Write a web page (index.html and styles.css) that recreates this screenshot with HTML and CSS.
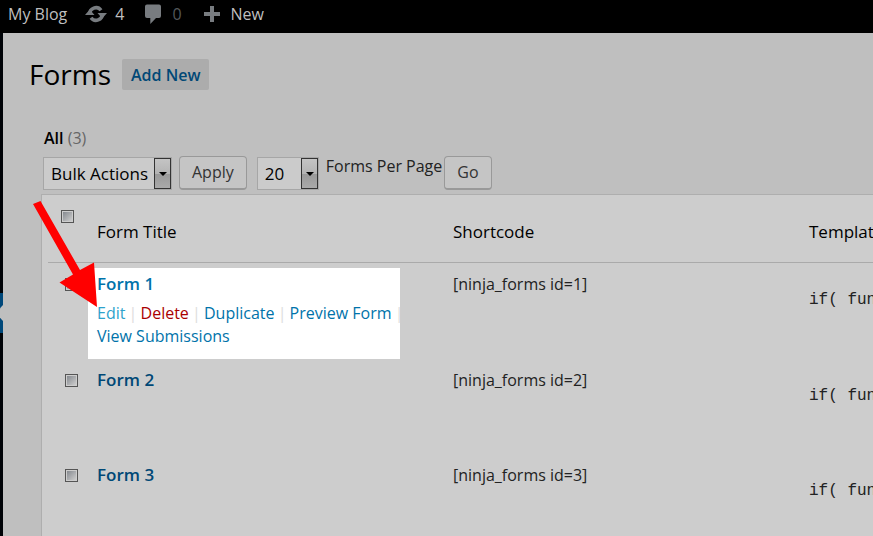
FILE: index.html
```
<!DOCTYPE html>
<html lang="en">
<head>
<meta charset="utf-8">
<title>Forms - My Blog</title>
<link rel="stylesheet" href="styles.css">
</head>
<body>
<nav class="adminbar">
  <a class="site" href="#">My Blog</a>
  <a class="updates" href="#">
    <svg width="22" height="18" viewBox="0 0 22 18" aria-hidden="true"><g fill="none" stroke="#787c80" stroke-width="3.500"><path d="M4.800 9.500A6.200 6.200 0 0 1 16 5.300"/><path d="M17.200 8.500A6.200 6.200 0 0 1 6 12.700"/></g><path d="M0 10L4.800 4.500L9.500 10ZM12.500 8H22L17.200 13.500Z"/></svg>
    <span>4</span>
  </a>
  <a class="comments" href="#">
    <svg width="18" height="20" viewBox="0 0 18 20" aria-hidden="true"><path d="M3 .5H15Q17 .5 17 2.500V12Q17 14 15 14H12L6.300 20V14H3Q1 14 1 12V2.500Q1 .5 3 .5Z"/></svg>
    <span>0</span>
  </a>
  <a class="new" href="#">
    <svg width="16" height="16" viewBox="0 0 16 16" aria-hidden="true"><path d="M6 0H10V6H16V10H10V16H6V10H0V6H6Z"/></svg>
    <span>New</span>
  </a>
</nav>
<div class="shell">
  <aside class="menu"><div class="current"></div></aside>
  <main>
    <header class="heading">
      <h1>Forms</h1>
      <a class="add" href="#">Add New</a>
    </header>
    <div class="views"><a href="#">All</a> <span>(3)</span></div>
    <form class="toolbar">
      <div class="select bulk">
        <select aria-label="Bulk actions"><option>Bulk Actions</option></select>
        <i></i>
      </div>
      <button type="button">Apply</button>
      <div class="select count">
        <select id="per-page"><option>20</option></select>
        <i></i>
      </div>
      <label for="per-page">Forms Per Page</label>
      <button type="button">Go</button>
    </form>
    <section class="panel">
      <table>
        <colgroup><col class="c-check"><col class="c-text"><col class="c-text"><col></colgroup>
        <thead>
          <tr>
            <th><input type="checkbox" aria-label="Select all"></th>
            <th>Form Title</th><th>Shortcode</th><th>Template Function</th>
          </tr>
        </thead>
        <tbody>
          <tr>
            <td><input type="checkbox" aria-label="Select Form 1"></td>
            <td class="lit">
              <div class="spotlight">
                <a class="title" href="#">Form 1</a>
                <div class="actions"><a class="edit" href="#">Edit</a> <b>|</b> <a class="delete" href="#">Delete</a> <b>|</b> <a href="#">Duplicate</a> <b>|</b> <a href="#">Preview Form</a> <b>|</b><br><a href="#">View Submissions</a></div>
                <svg class="arrow" width="64" height="106" viewBox="0 0 64 106" aria-hidden="true"><path d="M7.500 0L47 69L61 61.500L64 106L26.500 81.500L40 73.500L0 3Z"/></svg>
              </div>
            </td>
            <td>[ninja_forms id=1]</td>
            <td><code>if( function_exists( 'ninja_forms_display_form' ) )</code></td>
          </tr>
          <tr>
            <td><input type="checkbox" aria-label="Select Form 2"></td>
            <td><a class="title" href="#">Form 2</a></td>
            <td>[ninja_forms id=2]</td>
            <td><code>if( function_exists( 'ninja_forms_display_form' ) )</code></td>
          </tr>
          <tr>
            <td><input type="checkbox" aria-label="Select Form 3"></td>
            <td><a class="title" href="#">Form 3</a></td>
            <td>[ninja_forms id=3]</td>
            <td><code>if( function_exists( 'ninja_forms_display_form' ) )</code></td>
          </tr>
        </tbody>
      </table>
    </section>
  </main>
</div>
</body>
</html>
```
FILE: styles.css
```
* { box-sizing: border-box; }
body {
  margin: 0;
  min-height: 100vh;
  display: flex;
  flex-direction: column;
  overflow-x: hidden;
  background: #bfbfbf;
  color: #222;
  font: 16px/24px "Open Sans", sans-serif;
}
a { color: #004876; text-decoration: none; }

.adminbar {
  display: flex;
  height: 33px;
  padding: 0 8px 6px;
  background: #000;
}
.adminbar a { display: flex; align-items: center; gap: 8px; color: #bfbfbf; }
.adminbar svg { fill: #787c80; }
.adminbar .updates { margin-left: 18px; }
.adminbar .comments { margin-left: 20px; color: #54585b; gap: 10px; }
.adminbar .new { margin-left: 22px; gap: 11px; }

.shell { display: flex; flex: 1; }
.menu { width: 3px; flex: none; background: #000307; padding-top: 260px; }
.current { height: 40px; padding-top: 12px; background: #00487a; }
.current::after {
  content: "";
  display: block;
  height: 16px;
  background: #bfbfbf;
  clip-path: polygon(100% 0, 0 20%, 0 80%, 100% 100%);
}
main {
  display: flex;
  flex-direction: column;
  flex: 1;
  min-width: 0;
  padding: 23px 0 0 38px;
}

.heading { display: flex; align-items: center; gap: 11px; margin-left: -12px; height: 36px; }
h1 { margin: 0; font-size: 28px; font-weight: 400; color: #000; line-height: 36px; }
.add {
  padding: 4px 9px 3px;
  border-radius: 2px;
  background: #acacac;
  font-weight: 600;
}
.views { margin: 34px 0 6px 3px; color: #666; }
.views a { color: #000; font-weight: 600; }

.toolbar { display: flex; margin-left: 2px; height: 38px; }
.select { position: relative; height: 33px; margin-top: 1px; }
.select select {
  appearance: none;
  width: 100%;
  height: 33px;
  padding: 0 7px;
  border: 1px solid #a6a6a6;
  border-radius: 0;
  background: #cbcbcb;
  color: #000;
  font: 17px/24px "Open Sans", sans-serif;
}
.select i {
  position: absolute;
  inset: 1px 1px 1px auto;
  width: 17px;
  border: 1px solid #333;
  background: linear-gradient(#c4c4c4, #b4b4b4 50%, #999 52%, #aaa);
  pointer-events: none;
}
.select i::after {
  content: "";
  position: absolute;
  left: 4px;
  top: 13px;
  border: 4px solid transparent;
  border-top-color: #000;
  border-bottom: 0;
}
.bulk { width: 129px; margin-right: 7px; }
.count { width: 62px; margin: 1px 7px 0 10px; }
.toolbar button {
  height: 34px;
  padding: 0 12px 1px;
  border: 1px solid #999;
  border-bottom-width: 2px;
  border-radius: 4px;
  background: #c5c5c5;
  color: #333;
  font: 16px/24px "Open Sans", sans-serif;
}
.toolbar label { margin: -2px 2px 0 0; }

.panel {
  flex: 1;
  padding: 0 0 0 6px;
  border: 1px solid #aeaeae;
  border-width: 1px 0 0 1px;
  background: #cdcdcd;
}
table { width: 100%; min-width: 1100px; table-layout: fixed; border-collapse: collapse; }
.c-check { width: 40px; }
.c-text { width: 356px; }
th, td { padding: 9px; text-align: left; vertical-align: top; font-weight: 400; }
th { height: 67px; padding-top: 25px; border-bottom: 1px solid #aaa; color: #000; font-size: 17px; }
th:first-child { padding: 15px 0 0 13px; }
td { height: 95px; }
tbody tr:last-child td { height: 78px; padding-bottom: 0; }
td:first-child { padding: 15px 0 0 17px; }
th:first-child, td:first-child { line-height: 0; }
input {
  appearance: none;
  width: 13px;
  height: 13px;
  margin: 0;
  border: 1px solid #555;
  background: linear-gradient(135deg, #85898f, #cdcdcd) content-box;
  padding: 1px;
}
.title { font-size: 17px; font-weight: 600; }
code { display: block; padding-top: 16px; font: 16px/24px "Liberation Mono", monospace; white-space: nowrap; }

td.lit { padding: 5px 0 0; }
.spotlight {
  position: relative;
  width: 312px;
  height: 91px;
  padding: 4px 0 0 9px;
  background: #fff;
}
.spotlight a { color: #0073aa; }
.spotlight .edit { color: #2ea2cc; }
.spotlight .delete { color: #a00; }
.actions { margin-top: 6px; line-height: 23px; white-space: nowrap; }
.actions b { margin: 0 -1px; color: #ddd; font-weight: 400; }
.arrow { position: absolute; left: -55px; top: -67px; fill: #f00; }
```
